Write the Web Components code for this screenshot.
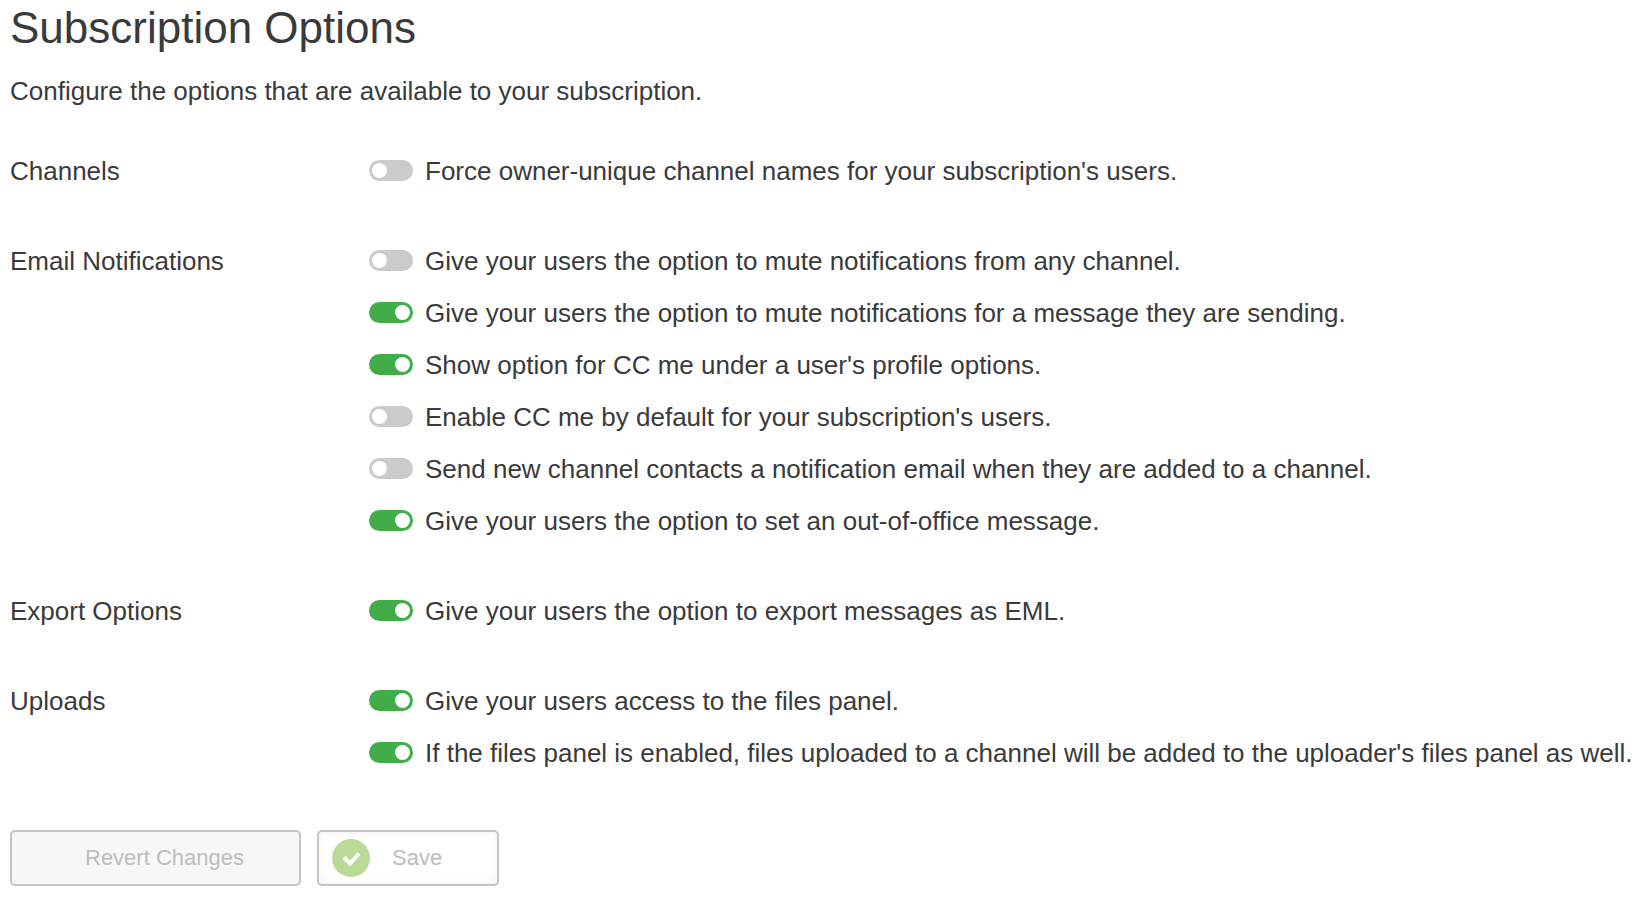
<!DOCTYPE html>
<html lang="en">
<head>
<meta charset="utf-8">
<title>Subscription Options</title>
<style>
    body {
        margin: 0;
        background: #fff;
        color: #3a3a3a;
        font-family: "Liberation Sans", Arial, Helvetica, sans-serif;
        font-size: 26px;
        line-height: 52px;
    }
</style>
</head>
<body>

<options-page>
    <span slot="title">Subscription Options</span>
    <span slot="intro">Configure the options that are available to your subscription.</span>

    <option-group>
        <span slot="name">Channels</span>
        <toggle-option>Force owner-unique channel names for your subscription's users.</toggle-option>
    </option-group>

    <option-group>
        <span slot="name">Email Notifications</span>
        <toggle-option>Give your users the option to mute notifications from any channel.</toggle-option>
        <toggle-option checked>Give your users the option to mute notifications for a message they are sending.</toggle-option>
        <toggle-option checked>Show option for CC me under a user's profile options.</toggle-option>
        <toggle-option>Enable CC me by default for your subscription's users.</toggle-option>
        <toggle-option>Send new channel contacts a notification email when they are added to a channel.</toggle-option>
        <toggle-option checked>Give your users the option to set an out-of-office message.</toggle-option>
    </option-group>

    <option-group>
        <span slot="name">Export Options</span>
        <toggle-option checked>Give your users the option to export messages as EML.</toggle-option>
    </option-group>

    <option-group>
        <span slot="name">Uploads</span>
        <toggle-option checked>Give your users access to the files panel.</toggle-option>
        <toggle-option checked>If the files panel is enabled, files uploaded to a channel will be added to the uploader's files panel as well.</toggle-option>
    </option-group>

    <action-button slot="actions" disabled>Revert Changes</action-button>
    <action-button slot="actions" kind="save" disabled>Save</action-button>
</options-page>

<script>
class BaseElement extends HTMLElement {
    constructor() {
        super()
        const template = document.createElement('template')
        template.innerHTML = this.getTemplate()
        this.attachShadow({mode: 'open'})
        this.shadowRoot.appendChild(template.content.cloneNode(true))
    }
}

class OptionsPage extends BaseElement {
    getTemplate() {
        return `
            <style>
                :host { display: block; padding: 0 0 8px 10px; }
                h1 { margin: 0; font-size: 44px; font-weight: normal; line-height: 56px; }
                p { margin: 9px 0 28px; }
                .groups { display: flex; flex-direction: column; gap: 38px; }
                .actions { display: flex; flex-wrap: wrap; gap: 16px; margin-top: 51px; }
            </style>

            <h1><slot name="title"></slot></h1>
            <p><slot name="intro"></slot></p>
            <div class="groups"><slot></slot></div>
            <div class="actions"><slot name="actions"></slot></div>
        `
    }
}

class OptionGroup extends BaseElement {
    getTemplate() {
        return `
            <style>
                :host { display: block; }
                section { display: grid; grid-template-columns: 359px 1fr; }
                h2 { margin: 0; font-size: inherit; font-weight: normal; }
            </style>

            <section>
                <h2><slot name="name"></slot></h2>
                <div><slot></slot></div>
            </section>
        `
    }
}

class ToggleOption extends BaseElement {
    static get observedAttributes() {
        return ['checked']
    }

    getTemplate() {
        return `
            <style>
                :host { display: block; }
                label { display: flex; gap: 12px; cursor: pointer; }
                input {
                    appearance: none;
                    flex: none;
                    display: flex;
                    box-sizing: border-box;
                    width: 44px;
                    height: 21px;
                    margin: 15px 0 0;
                    padding: 3px;
                    border-radius: 11px;
                    background: #cbcbcb;
                    cursor: pointer;
                }
                input::before {
                    content: "";
                    width: 15px;
                    height: 15px;
                    border-radius: 50%;
                    background: #fff;
                }
                input:checked { justify-content: flex-end; background: #41ad49; }
            </style>

            <label for="toggle">
                <input type="checkbox" id="toggle">
                <span><slot></slot></span>
            </label>
        `
    }

    attributeChangedCallback() {
        this.shadowRoot.querySelector('input').checked = this.hasAttribute('checked')
    }
}

class ActionButton extends BaseElement {
    static get observedAttributes() {
        return ['disabled']
    }

    getTemplate() {
        return `
            <style>
                :host { display: block; }
                button {
                    display: flex;
                    align-items: center;
                    gap: 22px;
                    box-sizing: border-box;
                    height: 56px;
                    padding: 0 55px 0 13px;
                    border: 2px solid #c4c4c4;
                    border-radius: 5px;
                    background: #f7f7f7;
                    color: #bdbdbd;
                    font: inherit;
                    font-size: 22px;
                }
                svg { width: 38px; height: 38px; }
                circle, path { display: none; }
                :host([kind="save"]) button {
                    background: #fff;
                    box-shadow: inset 0 0 8px #f0f0f0;
                }
                :host([kind="save"]) circle, :host([kind="save"]) path { display: inline; }
            </style>

            <button type="button">
                <svg viewBox="0 0 38 38" aria-hidden="true">
                    <circle cx="19" cy="19" r="19" fill="#badb98"/>
                    <path d="M12 18.500l6 6 9-10" fill="none" stroke="#fff" stroke-width="4"/>
                </svg>
                <span><slot></slot></span>
            </button>
        `
    }

    attributeChangedCallback() {
        this.shadowRoot.querySelector('button').disabled = this.hasAttribute('disabled')
    }
}

window.customElements.define('options-page', OptionsPage)
window.customElements.define('option-group', OptionGroup)
window.customElements.define('toggle-option', ToggleOption)
window.customElements.define('action-button', ActionButton)
</script>
</body>
</html>
